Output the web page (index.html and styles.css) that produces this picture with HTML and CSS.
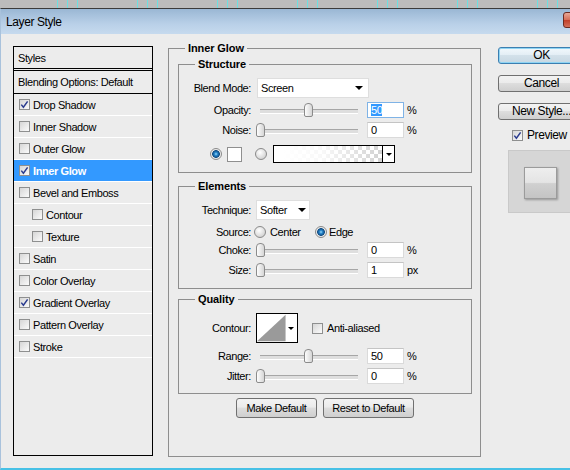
FILE: index.html
```html
<!DOCTYPE html>
<html lang="en">
<head>
    <meta charset="UTF-8">
    <title>Layer Style</title>
    <link rel="stylesheet" href="styles.css">
</head>
<body>
    <div class="ruler"></div>

    <div class="window">
        <div class="titlebar">
            <span class="title">Layer Style</span>
            <span class="close"></span>
        </div>

        <div class="dialog">
            <!-- lista de estilos -->
            <ul class="styles-list">
                <li class="head">Styles</li>
                <li class="blend">Blending Options: Default</li>
                <li><span class="cb on"><svg viewBox="0 0 9 9" width="9" height="9"><path d="M1.3 4.6 L3.4 7.2 L7.6 1.4" fill="none" stroke="#2b3c8f" stroke-width="1.5"/></svg></span>Drop Shadow</li>
                <li><span class="cb"></span>Inner Shadow</li>
                <li><span class="cb"></span>Outer Glow</li>
                <li class="active"><span class="cb on"><svg viewBox="0 0 9 9" width="9" height="9"><path d="M1.3 4.6 L3.4 7.2 L7.6 1.4" fill="none" stroke="#2b3c8f" stroke-width="1.5"/></svg></span>Inner Glow</li>
                <li><span class="cb"></span>Bevel and Emboss</li>
                <li class="sub-item"><span class="cb"></span>Contour</li>
                <li class="sub-item"><span class="cb"></span>Texture</li>
                <li><span class="cb"></span>Satin</li>
                <li><span class="cb"></span>Color Overlay</li>
                <li><span class="cb on"><svg viewBox="0 0 9 9" width="9" height="9"><path d="M1.3 4.6 L3.4 7.2 L7.6 1.4" fill="none" stroke="#2b3c8f" stroke-width="1.5"/></svg></span>Gradient Overlay</li>
                <li><span class="cb"></span>Pattern Overlay</li>
                <li><span class="cb"></span>Stroke</li>
            </ul>

            <fieldset class="group outer">
                <legend>Inner Glow</legend>

                <fieldset class="group inner structure">
                    <legend>Structure</legend>
                    <div class="row r-blend">
                        <span class="lbl">Blend Mode:</span>
                        <div class="select select-blend">Screen<span class="arrow"></span></div>
                    </div>
                    <div class="row r-opacity">
                        <span class="lbl">Opacity:</span>
                        <div class="slider"><span class="thumb" style="left: 49px;"></span></div>
                        <span class="num focus"><span class="sel">50</span></span>
                        <span class="unit">%</span>
                    </div>
                    <div class="row r-noise">
                        <span class="lbl">Noise:</span>
                        <div class="slider"><span class="thumb" style="left: 1px;"></span></div>
                        <span class="num">0</span>
                        <span class="unit">%</span>
                    </div>
                    <div class="row r-color">
                        <span class="radio on"></span>
                        <span class="color-swatch"></span>
                        <span class="radio"></span>
                        <div class="gradient">
                            <span class="gradient-fill"></span>
                            <span class="gradient-drop"><span class="arrow small"></span></span>
                        </div>
                    </div>
                </fieldset>

                <fieldset class="group inner elements">
                    <legend>Elements</legend>
                    <div class="row r-technique">
                        <span class="lbl">Technique:</span>
                        <div class="select select-technique">Softer<span class="arrow"></span></div>
                    </div>
                    <div class="row r-source">
                        <span class="lbl">Source:</span>
                        <span class="radio radio-center"></span>
                        <span class="opt opt-center">Center</span>
                        <span class="radio on radio-edge"></span>
                        <span class="opt opt-edge">Edge</span>
                    </div>
                    <div class="row r-choke">
                        <span class="lbl">Choke:</span>
                        <div class="slider"><span class="thumb" style="left: 1px;"></span></div>
                        <span class="num">0</span>
                        <span class="unit">%</span>
                    </div>
                    <div class="row r-size">
                        <span class="lbl">Size:</span>
                        <div class="slider"><span class="thumb" style="left: 1px;"></span></div>
                        <span class="num">1</span>
                        <span class="unit">px</span>
                    </div>
                </fieldset>

                <fieldset class="group inner quality">
                    <legend>Quality</legend>
                    <div class="row r-contour">
                        <span class="lbl">Contour:</span>
                        <div class="contour">
                            <svg class="contour-curve" viewBox="0 0 30 28" width="30" height="28"><polygon points="0,28 30,0 30,28" fill="#9a9a9a"/></svg>
                            <span class="contour-drop"><span class="arrow small"></span></span>
                        </div>
                        <span class="cb"></span>
                        <span class="opt">Anti-aliased</span>
                    </div>
                    <div class="row r-range">
                        <span class="lbl">Range:</span>
                        <div class="slider"><span class="thumb" style="left: 49px;"></span></div>
                        <span class="num">50</span>
                        <span class="unit">%</span>
                    </div>
                    <div class="row r-jitter">
                        <span class="lbl">Jitter:</span>
                        <div class="slider"><span class="thumb" style="left: 1px;"></span></div>
                        <span class="num">0</span>
                        <span class="unit">%</span>
                    </div>
                </fieldset>

                <div class="defaults">
                    <button class="btn small btn-make">Make Default</button>
                    <button class="btn small btn-reset">Reset to Default</button>
                </div>
            </fieldset>

            <div class="actions">
                <button class="btn default">OK</button>
                <button class="btn">Cancel</button>
                <button class="btn">New Style...</button>
                <div class="preview-check">
                    <span class="cb on"><svg viewBox="0 0 9 9" width="9" height="9"><path d="M1.3 4.6 L3.4 7.2 L7.6 1.4" fill="none" stroke="#2b3c8f" stroke-width="1.5"/></svg></span>
                    <span>Preview</span>
                </div>
                <div class="preview">
                    <div class="preview-swatch"></div>
                </div>
            </div>
        </div>
    </div>
</body>
</html>
```

FILE: styles.css
```css
* {
    box-sizing: border-box;
}

body {
    margin: 0;
    width: 570px;
    height: 470px;
    overflow: hidden;
    background-color: #bdbdbd;
    color: #000;
    font-family: 'Liberation Sans', Arial, sans-serif;
    font-size: 11px;
    letter-spacing: -0.4px;
}

/* regla de fondo con marcas cian */
.ruler {
    height: 8px;
    background-color: #bcbcbc;
    background-image: linear-gradient(90deg,
        transparent 57px, #6fe0e0 57px, #6fe0e0 58px, transparent 58px,
        transparent 67px, #6fe0e0 67px, #6fe0e0 68px, transparent 68px,
        transparent 77px, #6fe0e0 77px, #6fe0e0 78px, transparent 78px);
    background-size: 80px 8px;
}

.window {
    width: 610px;
    border-top: 1px solid #3b3b3b;
    border-left: 1px solid #a9c2dc;
    border-bottom: 2px solid #47c1e6;
    background-color: #ececec;
}

.titlebar {
    height: 25px;
    display: flex;
    align-items: center;
    background: linear-gradient(#9ab7d4, #b9d0e8 60%, #c6daee);
}

.title {
    padding-left: 5px;
    font-size: 12px;
}

.close {
    align-self: flex-start;
    margin: 3px 4px 0 auto;
    width: 43px;
    height: 16px;
    border: 1px solid #6d2b21;
    border-radius: 3px;
    background: linear-gradient(#e9a897, #d56c55 50%, #c2402a 52%, #d3705a);
}

.dialog {
    display: flex;
    align-items: flex-start;
    height: 434px;
    padding: 8px 0 0 12px;
}

/* Lista de estilos */
.styles-list {
    list-style: none;
    margin: 4px 0 0;
    padding: 0;
    width: 140px;
    height: 410px;
    border: 1px solid #000;
}

.styles-list li {
    display: flex;
    align-items: center;
    height: 22px;
    padding-left: 5px;
    border-bottom: 1px solid #fff;
}

.styles-list .head {
    height: 24px;
    padding-left: 4px;
    border-bottom: 3px double #000;
}

.styles-list .blend {
    height: 23px;
    padding-left: 4px;
    border-bottom: 1px solid #000;
}

.styles-list .sub-item {
    padding-left: 18px;
}

.styles-list .active {
    background-color: #3399ff;
    color: #fff;
    font-weight: bold;
}

.styles-list .cb {
    margin-right: 3px;
}

.cb {
    display: inline-flex;
    align-items: center;
    justify-content: center;
    flex: none;
    width: 11px;
    height: 11px;
    border: 1px solid #8e8f8f;
    background: linear-gradient(135deg, #d6d6d6, #fbfbfb);
}

.cb svg {
    display: block;
}

/* Grupos (fieldset) */
.group {
    margin: 0;
    min-width: 0;
    border: 1px solid #8e8e8e;
}

.group legend {
    padding: 0 3px;
    font-size: 11px;
    font-weight: bold;
    line-height: 13px;
    letter-spacing: -0.1px;
}

.outer {
    margin-left: 15px;
    width: 313px;
    height: 415px;
    padding: 0 8px 0 9px;
}

.outer > legend {
    margin-left: 7px;
}

.inner {
    padding: 0;
}

.inner > legend {
    margin-left: 16px;
}

.structure {
    margin-top: 3px;
    height: 115px;
}

.elements {
    margin-top: 7px;
    height: 109px;
}

.quality {
    margin-top: 4px;
    height: 101px;
}

.row {
    display: flex;
    align-items: center;
    height: 18px;
}

.lbl {
    width: 72px;
    margin-right: 6px;
    text-align: right;
}

.r-blend { margin-top: 7px; height: 20px; }
.r-opacity { margin-top: 3px; }
.r-noise { margin-top: 2px; }
.r-color { margin-top: 6px; padding-left: 31px; }

.r-technique { margin-top: 7px; height: 20px; }
.r-source { margin-top: 3px; }
.r-choke { margin-top: 0; }
.r-size { margin-top: 2px; }

.r-contour { margin-top: 7px; height: 30px; }
.r-range { margin-top: 4px; }
.r-jitter { margin-top: 2px; }

/* Controles */
.select {
    display: flex;
    align-items: center;
    justify-content: space-between;
    height: 20px;
    padding: 0 5px 0 3px;
    background-color: #fff;
    border: 1px solid #dedede;
}

.select-blend {
    width: 112px;
}

.select-technique {
    margin-left: -1px;
    width: 54px;
    padding-right: 3px;
}

.arrow {
    width: 0;
    height: 0;
    border-left: 4px solid transparent;
    border-right: 4px solid transparent;
    border-top: 4px solid #000;
}

.arrow.small {
    border-left-width: 3px;
    border-right-width: 3px;
    border-top-width: 3px;
}

.slider {
    position: relative;
    width: 108px;
    height: 14px;
    margin: 0 4px 0 -2px;
}

.slider::before {
    content: "";
    position: absolute;
    left: 5px;
    right: 5px;
    top: 6px;
    height: 3px;
    border-top: 1px solid #a6a6a6;
    border-bottom: 1px solid #fff;
    background-color: #dedede;
}

.thumb {
    position: absolute;
    top: 0;
    width: 9px;
    height: 14px;
    border: 1px solid #8b8b8b;
    border-radius: 4px 4px 2px 2px;
    background: linear-gradient(90deg, #fdfdfd, #d6d6d6);
}

.num {
    display: flex;
    align-items: center;
    width: 37px;
    height: 16px;
    padding-left: 3px;
    background-color: #fff;
    border: 1px solid #dadada;
    border-top-color: #c4c4c4;
}

.num.focus {
    border-color: #7fb3e6;
}

.sel {
    background-color: #3399ff;
    color: #fff;
}

.unit {
    margin-left: 3px;
}

.radio {
    flex: none;
    width: 12px;
    height: 12px;
    border-radius: 50%;
    border: 1px solid #8a8a8a;
    background: radial-gradient(circle at 40% 35%, #fff, #d4d4d4 75%);
}

.radio.on {
    background: radial-gradient(circle, #a4dcf7 0, #2b8bd0 1.5px, #0e4a82 3.5px, #e6e6e6 4.2px, #fbfbfb 6px);
}

.color-swatch {
    width: 15px;
    height: 15px;
    margin: 0 13px 0 5px;
    background-color: #fff;
    border: 1px solid #8f8f8f;
}

.gradient {
    display: flex;
    margin-left: 6px;
    width: 122px;
    height: 18px;
    border: 1px solid #000;
}

.gradient-fill {
    flex: 1;
    background:
        linear-gradient(90deg, #fff 8%, rgba(255, 255, 255, 0.85) 45%, rgba(255, 255, 255, 0)),
        repeating-conic-gradient(#d2d2d2 0 25%, #fff 0 50%) 0 0 / 8px 8px;
}

.gradient-drop,
.contour-drop {
    display: flex;
    align-items: center;
    justify-content: center;
    width: 12px;
    background-color: #fff;
}

.gradient-drop {
    border-left: 1px solid #000;
}

.opt {
    margin-left: 4px;
}

.radio-center {
    margin-left: -3px;
}

.opt-center {
    width: 45px;
}

.opt-edge {
    margin-left: 2px;
}

.contour {
    display: flex;
    margin-left: -1px;
    width: 42px;
    height: 30px;
    border: 1px solid #000;
    background-color: #fff;
}

.contour-curve {
    display: block;
}

.r-contour .cb {
    margin-left: 14px;
}

/* Botones */
.btn {
    display: block;
    width: 87px;
    height: 17px;
    padding: 0;
    margin: 0 0 11px;
    font-family: 'Liberation Sans', Arial, sans-serif;
    font-size: 12px;
    line-height: 15px;
    letter-spacing: inherit;
    color: #000;
    border: 1px solid #707070;
    border-radius: 3px;
    background: linear-gradient(#f3f3f3, #ebebeb 45%, #dddddd 50%, #cfcfcf);
}

.btn.default {
    border-color: #3c7fb1;
    box-shadow: inset 0 0 0 1px #8fd4f3;
    background: linear-gradient(#f2f8fc, #e4eef5 45%, #d3e1ea 50%, #c7d7e2);
}

.defaults {
    display: flex;
    justify-content: center;
    gap: 6px;
    margin-top: 4px;
}

.btn.small {
    height: 20px;
    margin: 0;
    font-size: 11px;
    line-height: 18px;
}

.btn-make {
    width: 81px;
}

.btn-reset {
    width: 91px;
}

.actions {
    margin: 5px 0 0 17px;
    width: 87px;
}

.preview-check {
    display: flex;
    align-items: center;
    gap: 4px;
    height: 14px;
    margin: -3px 0 0 14px;
    font-size: 12px;
    white-space: nowrap;
}

.preview {
    margin: 8px 0 0 10px;
    width: 70px;
    height: 63px;
    padding: 16px 0 0 15px;
    background-color: #d6d6d6;
    border: 1px solid #c9c9c9;
}

.preview-swatch {
    width: 33px;
    height: 32px;
    border: 1px solid #9b9b9b;
    background: linear-gradient(#eeeeee, #e4e4e4 48%, #d0d0d0 52%, #c4c4c4);
    box-shadow: 1px 1px 2px rgba(0, 0, 0, 0.3);
}
```
